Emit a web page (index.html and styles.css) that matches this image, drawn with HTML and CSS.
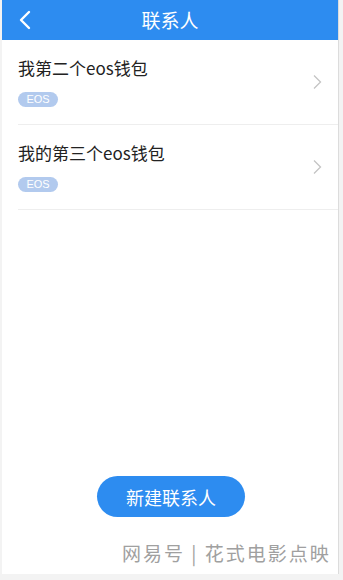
FILE: index.html
```html
<!DOCTYPE html>
<html lang="zh">
<head>
<meta charset="utf-8">
<link rel="stylesheet" href="styles.css">
</head>
<body>
<div class="app">
  <header class="bar">
    <svg class="back" width="14" height="20" viewBox="0 0 14 20"><path d="M11 2 L3 10 L11 18" fill="none" stroke="#fff" stroke-width="2.4" stroke-linecap="round" stroke-linejoin="round"/></svg>
    <div class="title">联系人</div>
  </header>
  <ul class="list">
    <li class="row">
      <div class="info">
        <div class="name">我第二个eos钱包</div>
        <span class="tag">EOS</span>
      </div>
      <svg class="chev" width="10" height="16" viewBox="0 0 10 16"><path d="M2 1.5 L8.5 8 L2 14.5" fill="none" stroke="#c4c4c4" stroke-width="1.3"/></svg>
    </li>
    <li class="row">
      <div class="info">
        <div class="name">我的第三个eos钱包</div>
        <span class="tag">EOS</span>
      </div>
      <svg class="chev" width="10" height="16" viewBox="0 0 10 16"><path d="M2 1.5 L8.5 8 L2 14.5" fill="none" stroke="#c4c4c4" stroke-width="1.3"/></svg>
    </li>
  </ul>
  <div class="spacer"></div>
  <button class="add">新建联系人</button>
  <div class="mark">网易号 | 花式电影点映</div>
</div>
</body>
</html>
```
FILE: styles.css
```css
html, body {
  margin: 0;
  padding: 0;
}
body {
  background: #f3f3f3;
  width: 343px;
  height: 580px;
  overflow: hidden;
  font-family: "Noto Sans CJK SC", "Noto Sans", sans-serif;
}
.app {
  margin-left: 2px;
  width: 336px;
  height: 574px;
  background: #fff;
  border-right: 1px solid #dcdcdc;
  display: flex;
  flex-direction: column;
}
.bar {
  height: 40px;
  background: #2d8cf0;
  display: flex;
  align-items: center;
  position: relative;
  flex-shrink: 0;
}
.back {
  margin-left: 16px;
}
.title {
  position: absolute;
  left: 0;
  right: 0;
  text-align: center;
  color: #fff;
  font-size: 19px;
  line-height: 40px;
  pointer-events: none;
}
.list {
  list-style: none;
  margin: 0;
  padding: 0 0 0 16px;
}
.row {
  height: 84px;
  border-bottom: 1px solid #eeeeee;
  display: flex;
  align-items: center;
  padding-right: 16px;
}
.info {
  flex: 1;
  align-self: flex-start;
  display: flex;
  flex-direction: column;
  align-items: flex-start;
  padding-top: 17px;
}
.name {
  font-size: 17px;
  line-height: 22px;
  color: #222;
}
.tag {
  margin-top: 13px;
  background: #b2caee;
  color: #fff;
  font-family: "Liberation Sans", Arial, sans-serif;
  font-size: 11px;
  line-height: 15px;
  height: 15px;
  width: 40px;
  text-align: center;
  border-radius: 8px;
}
.spacer {
  flex: 1;
}
.add {
  align-self: center;
  width: 148px;
  height: 41px;
  border: none;
  border-radius: 21px;
  background: #2d8cf0;
  color: #fff;
  font-family: "Noto Sans CJK SC", sans-serif;
  font-size: 18px;
  margin-left: 2px;
  padding: 0;
}
.mark {
  margin-top: 24px;
  height: 33px;
  padding-left: 120px;
  font-size: 19px;
  line-height: 24px;
  color: #a0a0a0;
  letter-spacing: 2px;
  white-space: nowrap;
  text-shadow: 0 0 1px #fff;
}
```
